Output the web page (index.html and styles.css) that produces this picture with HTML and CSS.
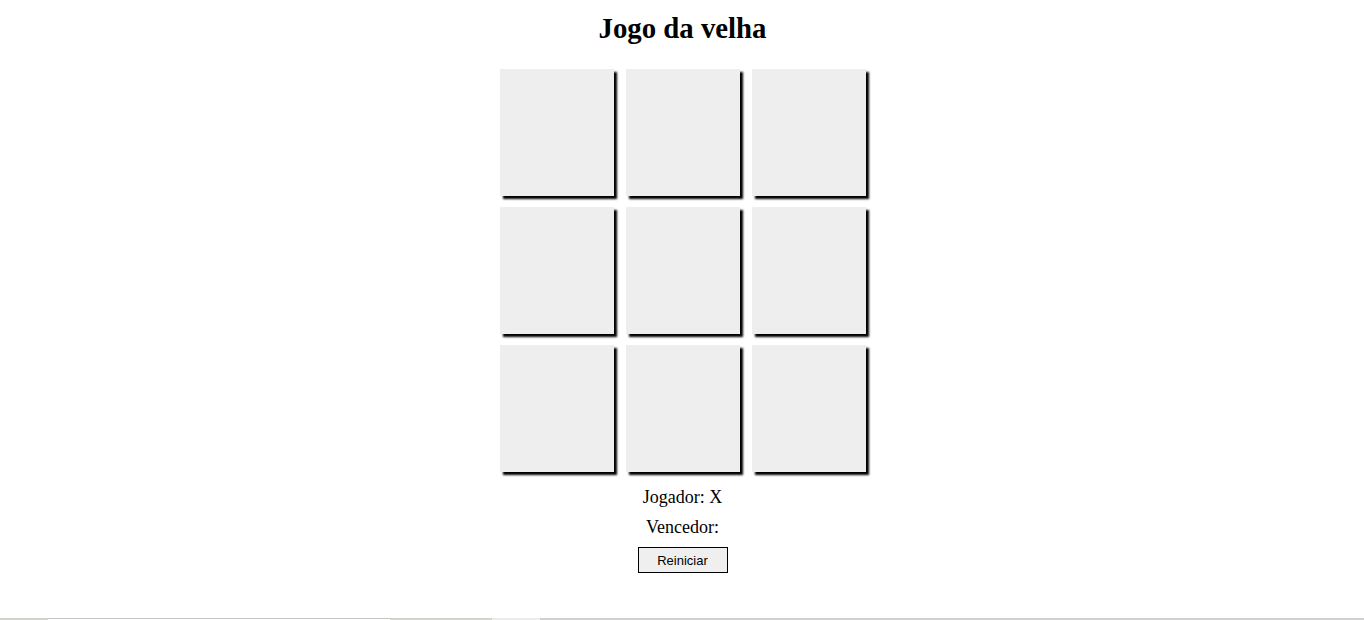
FILE: index.html
```html
<!DOCTYPE html>
<html lang="pt">
<head>
<meta charset="utf-8">
<title>Jogo da velha</title>
<link rel="stylesheet" href="styles.css">
</head>
<body>
<div class="page">
  <main class="game">
    <h1 class="title">Jogo da velha</h1>
    <div class="board">
      <div class="cell"></div>
      <div class="cell"></div>
      <div class="cell"></div>
      <div class="cell"></div>
      <div class="cell"></div>
      <div class="cell"></div>
      <div class="cell"></div>
      <div class="cell"></div>
      <div class="cell"></div>
    </div>
    <div class="status">
      <p class="line">Jogador: X</p>
      <p class="line">Vencedor:</p>
      <button class="restart" type="button">Reiniciar</button>
    </div>
  </main>
  <div class="bottombar">
    <span class="seg seg-a"></span>
    <span class="seg seg-b"></span>
    <span class="seg seg-c"></span>
    <span class="seg seg-d"></span>
    <span class="seg seg-e"></span>
  </div>
</div>
</body>
</html>
```

FILE: styles.css
```css
html, body {
  margin: 0;
  padding: 0;
  background: #ffffff;
}

body {
  font-family: "Liberation Serif", "Times New Roman", serif;
  color: #000;
}

.page {
  height: 620px;
  display: flex;
  flex-direction: column;
  overflow: hidden;
}

.game {
  flex: 1;
  display: flex;
  flex-direction: column;
  align-items: center;
  padding-left: 1px;
}

.title {
  margin: 12px 0 0 0;
  font-size: 28.8px;
  font-weight: bold;
  line-height: 33px;
}

.board {
  margin-top: 24px;
  display: grid;
  grid-template-columns: repeat(3, 114px);
  grid-template-rows: repeat(3, 127px);
  column-gap: 12px;
  row-gap: 11px;
  margin-left: 1px;
}

.cell {
  background: #eeeeee;
  box-shadow: 3px 3px 2px #000;
}

.status {
  margin-top: 15px;
  display: flex;
  flex-direction: column;
  align-items: center;
  gap: 9px;
}

.line {
  margin: 0;
  font-size: 18px;
  line-height: 21px;
}

.restart {
  margin-top: 0;
  width: 90px;
  height: 26px;
  padding: 0;
  background: #efefef;
  border: 1px solid #000;
  border-radius: 0;
  font-family: "Liberation Sans", Arial, sans-serif;
  font-size: 13px;
  color: #000;
}

.bottombar {
  height: 2px;
  display: flex;
}

.seg {
  display: block;
  height: 2px;
}

.seg-a { width: 48px; background: #d2d2cc; }
.seg-b { width: 342px; background: #fff; border-top: 1px solid #c4c4c4; height: 1px; }
.seg-c { width: 102px; background: #d4d4ce; }
.seg-d { width: 48px; background: #ececec; }
.seg-e { flex: 1; background: #d0d0d0; }
```
